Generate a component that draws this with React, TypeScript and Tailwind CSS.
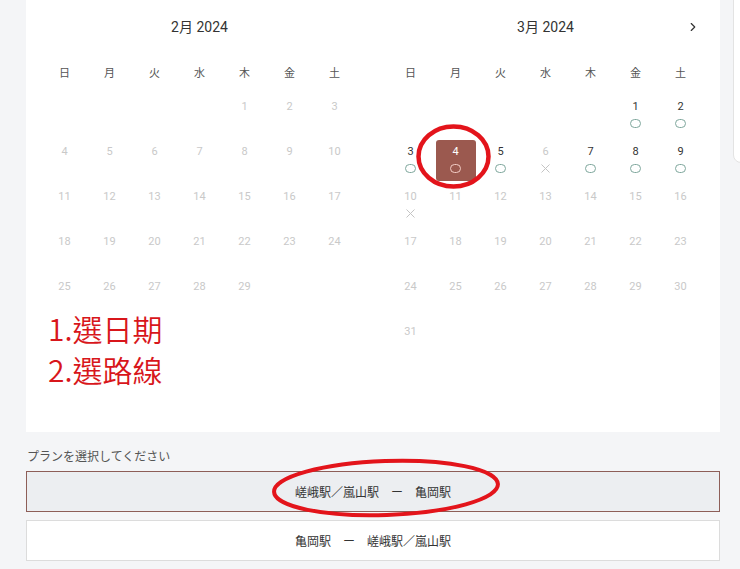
import { ChevronRight } from 'lucide-react';

type Mark = 'o' | 'x' | null;
type Day = { d: number; on?: boolean; mark?: Mark; sel?: boolean };

const WEEK = ['日', '月', '火', '水', '木', '金', '土'];

const feb: (Day | null)[] = [
  null, null, null, null,
  ...Array.from({ length: 29 }, (_, i) => ({ d: i + 1 })),
];

const marDays: Record<number, Partial<Day>> = {
  1: { on: true, mark: 'o' },
  2: { on: true, mark: 'o' },
  3: { on: true, mark: 'o' },
  4: { on: true, mark: 'o', sel: true },
  5: { on: true, mark: 'o' },
  6: { mark: 'x' },
  7: { on: true, mark: 'o' },
  8: { on: true, mark: 'o' },
  9: { on: true, mark: 'o' },
  10: { mark: 'x' },
};

const mar: (Day | null)[] = [
  null, null, null, null, null,
  ...Array.from({ length: 31 }, (_, i) => ({ d: i + 1, ...marDays[i + 1] })),
];

function Cell({ day }: { day: Day | null }) {
  if (!day) return <div className="h-[45px]" />;
  return (
    <div className="h-[45px] flex justify-center">
      <div
        className={
          'w-[40px] h-[41px] mt-[1px] rounded-[3px] flex flex-col items-center pt-[5px] ' +
          (day.sel ? 'bg-[#9b594f]' : '')
        }
      >
        <div
          className={
            'text-[11px] leading-[14px] ' +
            (day.sel ? 'text-white' : day.on ? 'text-[#333]' : 'text-[#c9c9c9]')
          }
        >
          {day.d}
        </div>
        {day.mark === 'o' && (
          <div
            className={
              'mt-[5px] w-[11px] h-[9px] rounded-full border ' +
              (day.sel ? 'border-[#f3cdc6]' : 'border-[#7fa79d]')
            }
          />
        )}
        {day.mark === 'x' && (
          <svg className="mt-[4px]" width="11" height="11" viewBox="0 0 11 11">
            <path d="M1.5 1.5 L9.5 9.5 M9.5 1.5 L1.5 9.5" stroke="#c4c4c4" strokeWidth="1" fill="none" />
          </svg>
        )}
      </div>
    </div>
  );
}

function Month({ title, days, next }: { title: string; days: (Day | null)[]; next?: boolean }) {
  return (
    <div className="w-[315px] shrink-0">
      <div className="h-[54px] flex items-center justify-center relative text-[14px] text-[#333]">
        {title}
        {next && (
          <ChevronRight className="absolute right-[3px] top-[20px] text-[#333]" size={14} strokeWidth={2} />
        )}
      </div>
      <div className="grid grid-cols-7 h-[40px] items-center text-[11px] text-[#555]">
        {WEEK.map((w) => (
          <div key={w} className="text-center">{w}</div>
        ))}
      </div>
      <div className="grid grid-cols-7">
        {days.map((d, i) => (
          <Cell key={i} day={d} />
        ))}
      </div>
    </div>
  );
}

export default function App() {
  return (
    <div
      className="relative w-[740px] h-[569px] overflow-hidden bg-[#f4f5f7]"
      style={{ fontFamily: 'Roboto, "Noto Sans CJK JP", sans-serif' }}
    >
      <div className="flex">
        <div className="ml-[26px] w-[694px] shrink-0">
          <div className="relative bg-white h-[432px] flex gap-[31px] pl-[16px]">
            <Month title="2月 2024" days={feb} />
            <Month title="3月 2024" days={mar} next />
            <div
              className="absolute left-[22px] top-[308px] text-[30px] leading-[41px] text-[#d8161b]"
              style={{ fontFamily: '"Noto Sans CJK TC", sans-serif', fontWeight: 350 }}
            >
              <div>1.選日期</div>
              <div>2.選路線</div>
            </div>
          </div>
          <div className="pt-[16px] text-[12px] text-[#555]" style={{ fontFamily: '"Noto Sans CJK JP", sans-serif' }}>
            <div className="leading-[16px] pl-[1px]">プランを選択してください</div>
            <button className="mt-[7px] w-full h-[41px] bg-[#eceef1] border border-[#8d5e58] text-[12px] text-[#333]">
              嵯峨駅／嵐山駅　ー　亀岡駅
            </button>
            <button className="mt-[8px] w-full h-[41px] bg-white border border-[#dcdcdc] text-[12px] text-[#333]">
              亀岡駅　ー　嵯峨駅／嵐山駅
            </button>
          </div>
        </div>
        <div className="ml-[13px] -mt-[10px] h-[173px] w-[40px] shrink-0 bg-white border border-[#e3e3e3] rounded-lg" />
      </div>
      <svg className="absolute inset-0 pointer-events-none" width="740" height="569">
        <ellipse cx="453.5" cy="156.5" rx="35" ry="30" fill="none" stroke="#e3141b" strokeWidth="4.5" />
        <ellipse cx="386" cy="488" rx="112" ry="27" fill="none" stroke="#e3141b" strokeWidth="4" transform="rotate(-2 386 488)" />
      </svg>
    </div>
  );
}
